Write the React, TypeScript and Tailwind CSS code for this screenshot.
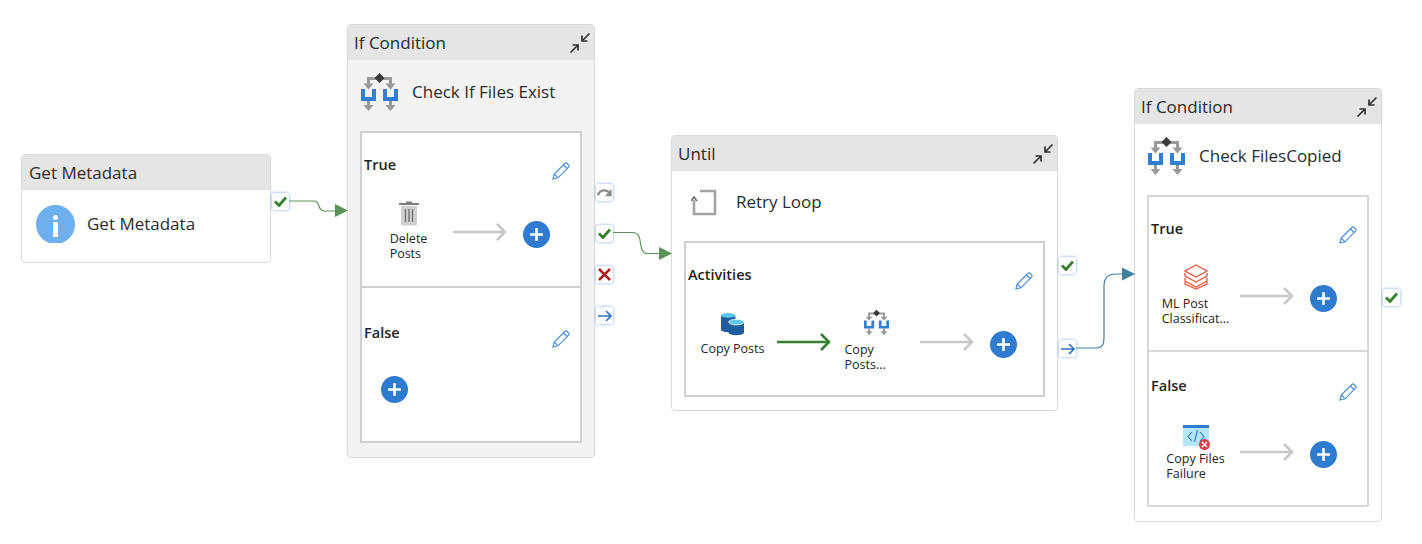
import type { ReactNode } from 'react';

const IfIcon = ({ className }: { className: string }) => (
  <svg viewBox="0 0 37 40" className={className}>
    <path d="M7.500 13V6.500h22V13" fill="none" stroke="#999" strokeWidth="3" />
    <path d="M2.500 11.500h10l-5 6zM24.500 11.500h10l-5 6z" fill="#999" />
    <path d="M18.500 1l5 5-5 5-5-5z" fill="#3b3b3b" />
    <path d="M2 17v10h11V17M24 17v10h11V17" fill="none" stroke="#2f7fd6" strokeWidth="4" />
    <path d="M7.500 29v5M29.500 29v5" stroke="#999" strokeWidth="3" />
    <path d="M2.500 33h10l-5 6zM24.500 33h10l-5 6z" fill="#999" />
  </svg>
);

const CollapseIcon = () => (
  <svg viewBox="0 0 22 22" className="h-[22px] w-[22px]" fill="none" stroke="#333" strokeWidth="1.7">
    <path d="M20.500 1.500L13 9M13 3.500V9h5.500" />
    <path d="M1.500 20.500L9 13M3.500 13H9v5.500" />
  </svg>
);

const Pencil = () => (
  <svg viewBox="0 0 18 18" className="mt-[29px] h-[18px] w-[18px]" fill="none" stroke="#4a90d9" strokeWidth="1.2">
    <path d="M1 17l1.200-5L12.800 1.500a1.700 1.700 0 0 1 2.400 0l1.300 1.300a1.700 1.700 0 0 1 0 2.400L6 15.800zM2.200 12L6 15.800M11.500 3l3.500 3.500" />
  </svg>
);

const Plus = () => (
  <div className="flex h-[27px] w-[27px] shrink-0 items-center justify-center rounded-full bg-[#2f7bd0]">
    <svg viewBox="0 0 13 13" className="h-[13px] w-[13px]">
      <path d="M6.500 1v11M1 6.500h11" stroke="#fff" strokeWidth="2.6" strokeLinecap="round" />
    </svg>
  </div>
);

const Arrow = ({ color = '#c8c8c8' }: { color?: string }) => (
  <svg viewBox="0 0 54 18" className="mt-[29px] h-[18px] w-[54px] shrink-0" fill="none" stroke={color} strokeWidth="2.6">
    <path d="M0 9h52M44 1l8 8-8 8" />
  </svg>
);

// arrow and add button that close every activity row
const RowEnd = () => (
  <>
    <Arrow />
    <div className="mt-[27px] ml-[16px]"><Plus /></div>
  </>
);

const Trash = () => (
  <svg viewBox="0 0 20 25" className="h-[25px] w-[20px]">
    <path d="M7 1.500h6M0 3h20" stroke="#7d7d7d" strokeWidth="2" />
    <path d="M2 5h16v18a1.500 1.500 0 0 1-1.500 1.500h-13A1.500 1.500 0 0 1 2 23z" fill="#cfcfcf" />
    <path d="M6.500 8v13M10 8v13M13.500 8v13" stroke="#777" strokeWidth="1.5" />
  </svg>
);

const Database = () => (
  <svg viewBox="0 0 24 24" className="h-[24px] w-[23px]">
    <path d="M0 3h15v15H0z" fill="#1f5d9f" />
    <ellipse cx="7.500" cy="18" rx="7.500" ry="2.500" fill="#1f5d9f" />
    <ellipse cx="7.500" cy="3" rx="7.500" ry="2.500" fill="#5fc7e8" />
    <path d="M8 10h16v11H8z" fill="#1f5d9f" />
    <ellipse cx="16" cy="21" rx="8" ry="2.800" fill="#1f5d9f" />
    <ellipse cx="16" cy="10" rx="8" ry="3" fill="#5fc7e8" stroke="#fff" strokeWidth="0.8" />
  </svg>
);

const Databricks = () => (
  <svg viewBox="0 0 24 26" className="h-[26px] w-[24px]" fill="none" stroke="#e8573f" strokeWidth="1.3">
    <path d="M12 1l11 6-11 6L1 7z" />
    <path d="M1 9v3l11 6 11-6V9" />
    <path d="M1 14v3l11 6 11-6v-3" />
    <path d="M1 18v2l11 5 11-5v-2" />
  </svg>
);

const WebFail = () => (
  <div className="relative h-[21px] w-[26px] bg-[#b3e6fb]">
    <div className="h-[3px] bg-[#2f7bd0]" />
    <svg viewBox="0 0 26 18" className="h-[18px] w-[26px]" fill="none" stroke="#2f7bd0" strokeWidth="1.1">
      <path d="M9 4l-4 4.500 4 4.500M17 4l4 4.500-4 4.500M14.500 2l-3 12" />
    </svg>
    <div className="absolute right-[-1px] bottom-[-4px] flex h-[11px] w-[11px] items-center justify-center rounded-full bg-[#dc3f48]">
      <svg viewBox="0 0 7 7" className="h-[7px] w-[7px]">
        <path d="M1 1l5 5M6 1L1 6" stroke="#fff" strokeWidth="1.5" />
      </svg>
    </div>
  </div>
);

const InfoIcon = () => (
  <div className="relative h-[38px] w-[39px] overflow-hidden">
    <div className="flex h-[39px] w-[39px] flex-col items-center rounded-full bg-[#6db0ed] pt-[10px]">
      <div className="h-[5px] w-[5px] rounded-full bg-white" />
      <div className="mt-[2px] h-[15px] w-[5px] bg-white" />
    </div>
  </div>
);

const RetryIcon = () => (
  <svg viewBox="0 0 26 27" className="h-[27px] w-[26px]" fill="none" stroke="#a3a3a3" strokeWidth="2.6">
    <path d="M9 2h15v23H3V11" />
    <path d="M0 12l3-4 3 4" strokeWidth="1.5" stroke="#666" />
  </svg>
);

const Activity = ({ icon, label, widthClass = 'w-[91px]', labelClass = 'mt-[5px]' }: { icon: ReactNode; label: ReactNode; widthClass?: string; labelClass?: string }) => (
  <div className={`flex shrink-0 flex-col items-center pl-[2px] ${widthClass}`}>
    <div className="flex h-[32px] items-end justify-center">{icon}</div>
    <div className={`text-[12.5px] leading-[15px] text-[#242424] ${labelClass}`}>{label}</div>
  </div>
);

const Branch = ({ title, children, className }: { title: string; children?: ReactNode; className: string }) => (
  <div className={`flex flex-col ${className}`}>
    <div className="flex h-[47px] items-start justify-between pr-[10px] pl-[2px]">
      <span className="mt-[21px] text-[14.5px] leading-[22px] font-semibold text-[#242424]">{title}</span>
      <Pencil />
    </div>
    {children}
  </div>
);

const Card = ({ title, className, headClass = 'pl-[6px]', collapse = true, children }: { title: string; className: string; headClass?: string; collapse?: boolean; children: ReactNode }) => (
  <div className={`absolute flex flex-col overflow-hidden rounded-[4px] border border-[#dadada] ${className}`}>
    <div className={`flex h-[35px] shrink-0 items-center justify-between bg-[#e5e5e5] pr-[3px] ${headClass}`}>
      <span className="text-[17px] text-[#2b2b2b]">{title}</span>
      {collapse && <CollapseIcon />}
    </div>
    {children}
  </div>
);

const Port = ({ className, children }: { className: string; children: ReactNode }) => (
  <div className={`absolute flex h-[17px] w-[17px] items-center justify-center rounded-[2px] bg-white shadow-[0_0_3px_#6fa3e8] ${className}`}>
    {children}
  </div>
);

const Ok = () => (
  <svg viewBox="0 0 13 11" className="h-[11px] w-[13px]" fill="none" stroke="#38802f" strokeWidth="2.8">
    <path d="M1 5.500l4 4 7-8" />
  </svg>
);
const Fail = () => (
  <svg viewBox="0 0 13 13" className="h-[13px] w-[13px]" fill="none" stroke="#a81e1e" strokeWidth="2.5">
    <path d="M1 1l11 11M12 1L1 12" />
  </svg>
);
const Next = () => (
  <svg viewBox="0 0 14 12" className="h-[12px] w-[14px]" fill="none" stroke="#2f72bd" strokeWidth="1.6">
    <path d="M0 6h13M8 1l5 5-5 5" />
  </svg>
);
const Skip = () => (
  <svg viewBox="0 0 16 12" className="h-[12px] w-[15px]" fill="none" stroke="#8a8a8a" strokeWidth="2.4">
    <path d="M1 8.500C3 2.500 10 1.500 13.500 6" />
    <path d="M15.500 1.500v8h-7z" fill="#8a8a8a" stroke="none" />
  </svg>
);

// connectors between the activities
const Connectors = () => (
  <svg className="absolute top-0 left-0 h-[544px] w-[1422px]" viewBox="0 0 1422 544" fill="none">
    <path d="M288 201h26c7 0 3 10 10 10h12" stroke="#5c9159" strokeWidth="1.2" />
    <path d="M335 204l13 6.500-13 6.500z" fill="#5c9159" />
    <path d="M612 232.500h21c12 0 3 21 15 21h11" stroke="#5c9159" strokeWidth="1.2" />
    <path d="M659 247l13 6.500-13 6.500z" fill="#5c9159" />
    <path d="M1075 348h21c8 0 8-6 8-12v-50c0-8 4-12 12-12h6" stroke="#3f7f9f" strokeWidth="1.2" />
    <path d="M1122 267.500l13 6.500-13 6.500z" fill="#3f7f9f" />
  </svg>
);

export default function App() {
  return (
    <div className="relative h-[544px] w-[1422px] overflow-hidden bg-white font-['Open_Sans',sans-serif]">
      <Card title="Get Metadata" collapse={false} headClass="pl-[7px]" className="top-[154px] left-[21px] h-[109px] w-[250px] bg-white">
        <div className="flex items-start gap-[12px] pt-[15px] pl-[14px]">
          <InfoIcon />
          <span className="pt-[6px] text-[17px] text-[#2b2b2b]">Get Metadata</span>
        </div>
      </Card>

      <Card title="If Condition" className="top-[24px] left-[347px] h-[434px] w-[248px] bg-[#f3f3f3]">
        <div className="mb-[7px] flex h-[64px] shrink-0 items-center gap-[14px] pl-[13px]">
          <IfIcon className="h-[40px] w-[37px]" />
          <span className="text-[17px] text-[#2b2b2b]">Check If Files Exist</span>
        </div>
        <div className="mx-[12px] flex h-[312px] flex-col border-2 border-[#d0d0d0] bg-white">
          <Branch title="True" className="h-[155px] shrink-0 border-b-[2px] border-[#d0d0d0]">
            <div className="mt-[14px] flex items-start">
              <Activity icon={<Trash />} label={<>Delete<br />Posts</>} />
              <RowEnd />
            </div>
          </Branch>
          <Branch title="False" className="flex-1 pt-[13px]">
            <div className="mt-[28px] pl-[19px]"><Plus /></div>
          </Branch>
        </div>
      </Card>

      <Card title="Until" className="top-[135px] left-[671px] h-[276px] w-[387px] bg-white">
        <div className="mb-[8px] flex h-[62px] shrink-0 items-center gap-[19px] pl-[19px]">
          <RetryIcon />
          <span className="text-[17px] text-[#2b2b2b]">Retry Loop</span>
        </div>
        <div className="mx-[12px] h-[156px] border-2 border-[#d0d0d0] bg-white">
          <Branch title="Activities" className="h-full">
            <div className="mt-[14px] flex items-start">
              <Activity icon={<Database />} label="Copy Posts" />
              <Arrow color="#38802f" />
              <Activity icon={<IfIcon className="h-[27px] w-[25px]" />} widthClass="w-[89px]" labelClass="mt-[6px] w-[64px]" label={<>Copy<br />Posts...</>} />
              <RowEnd />
            </div>
          </Branch>
        </div>
      </Card>

      <Card title="If Condition" className="top-[88px] left-[1134px] h-[434px] w-[248px] bg-white">
        <div className="mb-[7px] flex h-[64px] shrink-0 items-center gap-[14px] pl-[13px]">
          <IfIcon className="h-[40px] w-[37px]" />
          <span className="text-[17px] text-[#2b2b2b]">Check FilesCopied</span>
        </div>
        <div className="mx-[12px] flex h-[312px] flex-col border-2 border-[#d8d8d8] bg-white">
          <Branch title="True" className="h-[155px] shrink-0 border-b-[2px] border-[#d8d8d8]">
            <div className="mt-[14px] flex items-start">
              <Activity icon={<Databricks />} labelClass="mt-[6px]" label={<>ML Post<br />Classificat...</>} />
              <RowEnd />
            </div>
          </Branch>
          <Branch title="False" className="flex-1 pt-[2px]">
            <div className="mt-[13px] flex items-start">
              <Activity icon={<WebFail />} label={<>Copy Files<br />Failure</>} />
              <RowEnd />
            </div>
          </Branch>
        </div>
      </Card>

      <Connectors />

      <Port className="top-[193px] left-[272px]"><Ok /></Port>
      <Port className="top-[184px] left-[596px]"><Skip /></Port>
      <Port className="top-[225px] left-[596px]"><Ok /></Port>
      <Port className="top-[266px] left-[596px]"><Fail /></Port>
      <Port className="top-[307px] left-[596px]"><Next /></Port>
      <Port className="top-[257px] left-[1059px]"><Ok /></Port>
      <Port className="top-[340px] left-[1059px]"><Next /></Port>
      <Port className="top-[289px] left-[1383px]"><Ok /></Port>
    </div>
  );
}
